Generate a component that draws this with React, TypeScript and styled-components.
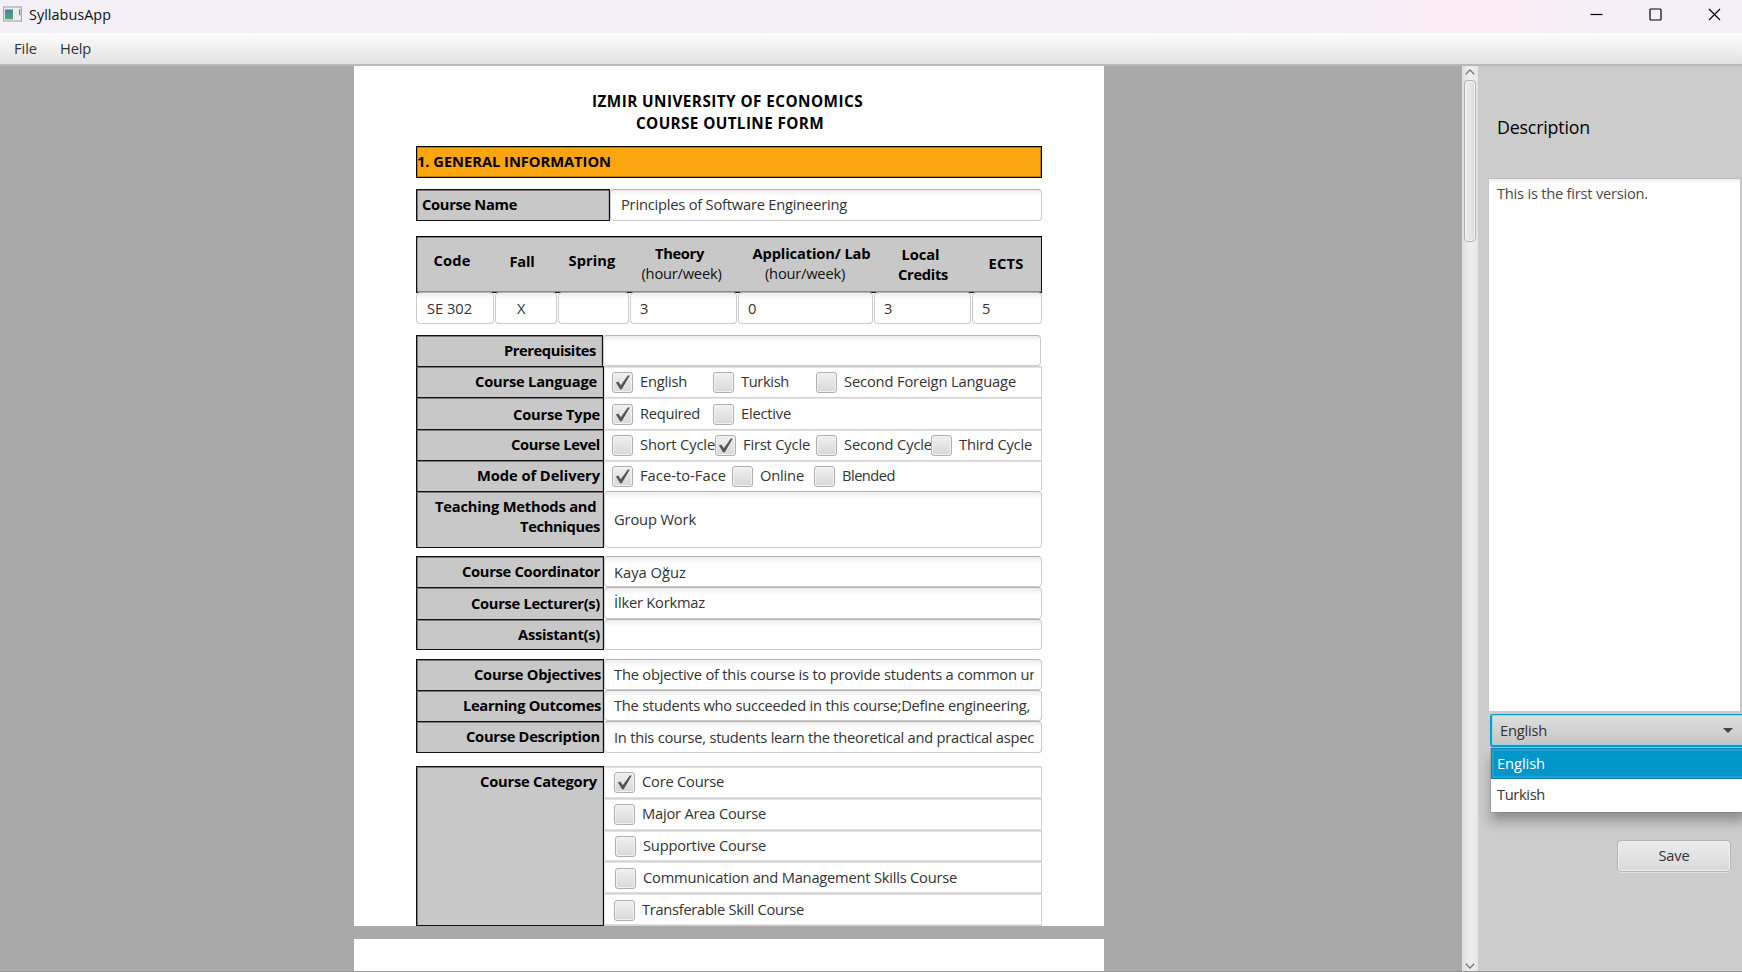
import React, { useLayoutEffect, useRef, useState } from "react";
import styled, { createGlobalStyle, css } from "styled-components";

const Global = createGlobalStyle`
  * { box-sizing: border-box; }
  html, body { margin: 0; padding: 0; overflow: hidden; }
  body { font-family: "Open Sans", "Noto Sans", sans-serif; font-size: 14.5px; color: #333; }
`;

/* ---------- text with an optical width ---------- */

const TextSpan = styled.span<{ $bold?: boolean; $size?: number; $color?: string; $dx?: number; $dy?: number }>`
  display: block;
  flex: none;
  white-space: pre;
  line-height: 18px;
  padding-bottom: 2px;
  font-weight: ${(p) => (p.$bold ? 700 : 400)};
  font-size: ${(p) => p.$size ?? 14.7}px;
  color: ${(p) => p.$color ?? (p.$bold ? "#000" : "#333")};
  margin-left: ${(p) => p.$dx ?? 0}px;
  margin-top: ${(p) => p.$dy ?? 0}px;
`;

type TextProps = {
  children: string;
  w: number;
  bold?: boolean;
  size?: number;
  color?: string;
  dx?: number;
  dy?: number;
};

function Text({ children, w, bold, size, color, dx, dy }: TextProps) {
  const ref = useRef<HTMLSpanElement>(null);
  const [tracking, setTracking] = useState(0);
  useLayoutEffect(() => {
    const el = ref.current;
    if (!el) return;
    const range = document.createRange();
    range.selectNodeContents(el);
    const natural = range.getBoundingClientRect().width;
    setTracking((w - natural) / children.length);
  }, []);
  return (
    <TextSpan
      ref={ref}
      $bold={bold}
      $size={size}
      $color={color}
      $dx={dx}
      $dy={dy}
      style={{ letterSpacing: `${tracking}px` }}
    >
      {children}
    </TextSpan>
  );
}

/* ---------- window chrome ---------- */

const Window = styled.div`
  width: 1742px;
  height: 972px;
  display: flex;
  flex-direction: column;
  overflow: hidden;
  background: #ccc;
`;

const TitleBar = styled.header`
  height: 33px;
  flex: none;
  display: flex;
  align-items: center;
  padding: 0 21px 5px 3px;
  background: linear-gradient(90deg, #f3f0f7 0, #f3f0f7 1150px, #faedf6 1440px, #faedf6 1520px, #f5f0f7 1640px);
`;

const AppIcon = styled.svg`
  width: 19px;
  height: 16px;
  margin-right: 7px;
`;

const Controls = styled.div`
  margin-left: auto;
  display: flex;
  gap: 46px;
  svg {
    width: 13px;
    height: 13px;
    display: block;
    fill: none;
    stroke: #000;
    stroke-width: 1.2;
  }
`;

const MenuBar = styled.nav`
  height: 33px;
  flex: none;
  display: flex;
  align-items: center;
  gap: 23px;
  padding: 0 14px;
  background: linear-gradient(#fdfdfd, #e2e2e2);
  border-bottom: 2px solid #b9b9b9;
`;

const Body = styled.div`
  flex: 1;
  min-height: 0;
  display: flex;
`;

const BottomEdge = styled.footer`
  height: 1px;
  flex: none;
  background: #979797;
`;

/* ---------- document area ---------- */

const Viewport = styled.main`
  width: 1462px;
  flex: none;
  background: #a9a9a9;
  padding-left: 354px;
  display: flex;
  flex-direction: column;
  gap: 13px;
  overflow: hidden;
`;

const Sheet = styled.section`
  width: 750px;
  flex: none;
  height: 860px;
  padding: 24px 62px 0 62px;
  background: #fff;
`;

const FormTitle = styled.div`
  height: 56px;
  display: flex;
  flex-direction: column;
  align-items: center;
  padding: 2px 3px 0 0;
  gap: 2px;
`;

const SectionBar = styled.div`
  height: 32px;
  display: flex;
  align-items: center;
  background: #fda50f;
  border: 1px solid #000;
  box-shadow: inset 0 0 0 1px rgba(90, 50, 0, 0.35);
`;

const Group = styled.div<{ $top: number }>`
  margin-top: ${(p) => p.$top}px;
  display: flex;
  flex-direction: column;
`;

const Row = styled.div<{ $h: number; $inset?: number }>`
  height: ${(p) => p.$h}px;
  flex: none;
  display: flex;
  padding-right: ${(p) => p.$inset ?? 0}px;
`;

const Label = styled.div<{ $w?: number; $right?: number; $left?: number; $last?: boolean }>`
  width: ${(p) => p.$w ?? 188}px;
  flex: none;
  display: flex;
  flex-direction: column;
  justify-content: center;
  align-items: ${(p) => (p.$left !== undefined ? "flex-start" : "flex-end")};
  padding: 0 ${(p) => p.$right ?? 3}px 0 ${(p) => p.$left ?? 0}px;
  background: #c8c8c8;
  border: 1px solid #111;
  border-bottom-width: ${(p) => (p.$last ? 1 : 0)}px;
  box-shadow: inset 1px 1px 0 rgba(0, 0, 0, 0.4), inset -1px 0 0 rgba(0, 0, 0, 0.15);
`;

const Field = styled.div<{ $w?: number; $pad?: number }>`
  ${(p) => (p.$w ? css`width: ${p.$w}px; flex: none;` : css`flex: 1; min-width: 0;`)}
  display: flex;
  align-items: center;
  padding-left: ${(p) => p.$pad ?? 9}px;
  border: 1px solid #cbcbcb;
  border-top-color: #b4b4b4;
  border-radius: 4px;
  background: linear-gradient(#ececec, #fff 6px);
`;

const Clip = styled.div<{ $w: number }>`
  width: ${(p) => p.$w}px;
  overflow: hidden;
`;

const Pane = styled.div<{ $thick?: boolean; $pad?: number; $last?: boolean }>`
  flex: 1;
  min-width: 0;
  display: flex;
  align-items: center;
  padding-left: ${(p) => p.$pad ?? 7}px;
  border: 1px solid #d2d2d2;
  border-bottom-width: ${(p) => (p.$last ? 1 : 0)}px;
  border-left-color: #ddd;
  box-shadow: ${(p) => (p.$thick ? "inset 0 1px 0 #e2e2e2, inset 0 -1px 0 #e0e0e0" : "inset 0 1px 0 #e4e4e4")};
`;

const HeadRow = styled.div`
  height: 57px;
  display: flex;
  background: #c8c8c8;
  border: 1px solid #111;
  border-top-color: #000;
  box-shadow: inset 0 1px 0 rgba(0, 0, 0, 0.35), inset 1px 0 0 rgba(0, 0, 0, 0.25), inset 0 -1px 0 rgba(0, 0, 0, 0.3);
`;

const HeadCell = styled.div<{ $w: number; $top: number; $left?: number }>`
  width: ${(p) => p.$w}px;
  flex: none;
  display: flex;
  flex-direction: column;
  align-items: center;
  padding: ${(p) => p.$top}px 0 0 ${(p) => p.$left ?? 0}px;
`;

const Cells = styled.div`
  display: flex;
  gap: 1px;
  height: 32px;
  margin-top: -1px;
`;

const Box = styled.div`
  width: 21px;
  height: 21px;
  flex: none;
  display: flex;
  align-items: center;
  justify-content: center;
  border: 1px solid #aeaeae;
  border-radius: 3px;
  background: linear-gradient(#f0f0f0, #d8d8d8);
  box-shadow: inset 0 0 0 1px #f3f3f3;
  svg { width: 17px; height: 17px; display: block; }
`;

const CheckItem = styled.div<{ $gap: number; $dy: number }>`
  display: flex;
  align-items: center;
  flex: none;
  gap: 7px;
  margin-left: ${(p) => p.$gap}px;
  margin-top: ${(p) => p.$dy}px;
`;

function Check({ text, w, gap = 0, on, dy = 1 }: { text: string; w: number; gap?: number; on?: boolean; dy?: number }) {
  return (
    <CheckItem $gap={gap} $dy={dy}>
      <Box>
        {on && (
          <svg viewBox="0 0 17 17">
            <path d="M1.9 8.4 L4.3 7.6 L6.8 11.2 L13.8 1.6 L15.8 1.6 L7.8 15.2 L6 15.2 Z" fill="#555" />
          </svg>
        )}
      </Box>
      <Text w={w} dy={-1}>{text}</Text>
    </CheckItem>
  );
}

/* ---------- scroll bar ---------- */

const ScrollBar = styled.div`
  width: 16px;
  flex: none;
  display: flex;
  flex-direction: column;
  align-items: center;
  padding: 3px 0 2px;
  background: linear-gradient(90deg, #dedede, #efefef 50%, #e6e6e6);
  svg { width: 10px; height: 6px; fill: none; stroke: #777; stroke-width: 1.3; display: block; flex: none; }
`;

const Thumb = styled.div`
  width: 12px;
  height: 162px;
  margin: 5px 0 auto 0;
  border: 1px solid #b0b0b0;
  border-radius: 4px;
  background: linear-gradient(90deg, #efefef, #dcdcdc);
  box-shadow: inset 0 0 0 1px #f6f6f6;
`;

/* ---------- side panel ---------- */

const Side = styled.aside`
  flex: 1;
  min-width: 0;
  display: flex;
  flex-direction: column;
  padding: 50px 0 0 11px;
  background: #ccc;
`;

const Heading = styled.div`
  height: 63px;
  padding: 2px 0 0 8px;
`;

const TextArea = styled.div`
  width: 251px;
  height: 532px;
  padding: 5px 0 0 8px;
  background: linear-gradient(#efefef, #fff 5px);
  box-shadow: 0 -1px 0 #bdbdbd, 1px 0 0 #c3c3c3, -1px 0 0 #c6c6c6;
`;

const Combo = styled.div`
  width: 256px;
  height: 33px;
  flex: none;
  margin: 3px 0 0 1px;
  display: flex;
  align-items: center;
  padding: 0 12px 0 8px;
  border: 2px solid #0a9bcf;
  border-width: 1px 2px 2px;
  border-radius: 3px;
  background: linear-gradient(#dedede, #c6c6c6);
  box-shadow: inset 0 0 0 1px #9fd6ea;
  justify-content: space-between;
`;

const Arrow = styled.div`
  border: 5px solid transparent;
  border-top-color: #444;
  border-bottom: 0;
  margin-right: -1px;
`;

const Popup = styled.div`
  width: 256px;
  height: 64px;
  flex: none;
  margin: 1px 0 0 2px;
  background: #fff;
  box-shadow: 0 0 1px rgba(0, 0, 0, 0.6), 0 9px 11px rgba(0, 0, 0, 0.3);
`;

const Option = styled.div<{ $active?: boolean }>`
  height: 31px;
  display: flex;
  align-items: center;
  padding-left: 6px;
  ${(p) => p.$active && css`
    background: #0096c9;
    box-shadow: inset 0 0 0 1px #0a86b4, inset 0 0 0 3px #1fa2d0;
  `}
`;

const SaveButton = styled.div`
  width: 114px;
  height: 32px;
  margin: 28px 0 0 128px;
  display: flex;
  align-items: center;
  justify-content: center;
  border: 1px solid #b4b4b4;
  border-radius: 4px;
  background: linear-gradient(#ececec, #d9d9d9);
  box-shadow: inset 0 0 0 1px #f0f0f0, 0 1px 0 #e2e2e2;
`;

const CategoryRow = styled.div`
  height: 160px;
  display: flex;
`;

const CategoryLabel = styled(Label)`
  justify-content: flex-start;
`;

const Options = styled.div`
  flex: 1;
  min-width: 0;
  display: flex;
  flex-direction: column;
`;

export default function App() {
  return (
    <Window>
      <Global />
      <TitleBar>
        <AppIcon viewBox="0 0 19 16">
          <defs>
            <linearGradient id="pane" x1="0" y1="0" x2="0" y2="1">
              <stop offset="0" stopColor="#4a7fa8" />
              <stop offset="1" stopColor="#55a86c" />
            </linearGradient>
          </defs>
          <rect x="0.6" y="1" width="17.8" height="14" fill="#f3f4f4" stroke="#a6aaac" strokeWidth="1.2" />
          <rect x="2" y="3.4" width="8" height="10" fill="url(#pane)" />
          <rect x="11" y="3.4" width="4.6" height="10" fill="#e8ebe8" />
          <rect x="16" y="3.4" width="1.3" height="6" fill="url(#pane)" />
        </AppIcon>
        <Text w={82} size={14.4} color="#111" dy={4}>SyllabusApp</Text>
        <Controls>
          <svg viewBox="0 0 13 13"><path d="M0.5 6.5H12.5" /></svg>
          <svg viewBox="0 0 13 13"><rect x="1" y="1" width="11" height="11" rx="1" /></svg>
          <svg viewBox="0 0 13 13"><path d="M1 1L12 12M12 1L1 12" /></svg>
        </Controls>
      </TitleBar>
      <MenuBar>
        <Text w={23} dy={1}>File</Text>
        <Text w={31} dy={1}>Help</Text>
      </MenuBar>
      <Body>
        <Viewport>
          <Sheet>
            <FormTitle>
              <Text bold size={15.3} w={271}>IZMIR UNIVERSITY OF ECONOMICS</Text>
              <Text bold size={15.3} w={188} dx={5}>COURSE OUTLINE FORM</Text>
            </FormTitle>
            <SectionBar>
              <Text bold w={194}>1. GENERAL INFORMATION</Text>
            </SectionBar>

            <Group $top={11}>
              <Row $h={32}>
                <Label $w={194} $left={5} $last>
                  <Text bold w={95}>Course Name</Text>
                </Label>
                <Field $pad={10}>
                  <Text w={226}>Principles of Software Engineering</Text>
                </Field>
              </Row>
            </Group>

            <Group $top={15}>
              <HeadRow>
                <HeadCell $w={70} $top={14}><Text bold w={37}>Code</Text></HeadCell>
                <HeadCell $w={70} $top={15}><Text bold w={25}>Fall</Text></HeadCell>
                <HeadCell $w={70} $top={14}><Text bold w={47}>Spring</Text></HeadCell>
                <HeadCell $w={105} $top={7}>
                  <Text bold w={49}>Theory</Text>
                  <Text w={80} color="#111" dx={4}>(hour/week)</Text>
                </HeadCell>
                <HeadCell $w={159} $top={7}>
                  <Text bold w={118}>Application/ Lab</Text>
                  <Text w={80} color="#111" dx={-13}>(hour/week)</Text>
                </HeadCell>
                <HeadCell $w={59} $top={8}>
                  <Text bold w={38}>Local</Text>
                  <Text bold w={50} dx={5}>Credits</Text>
                </HeadCell>
                <HeadCell $w={91} $top={17} $left={21}><Text bold w={35}>ECTS</Text></HeadCell>
              </HeadRow>
              <Cells>
                <Field $w={78} $pad={10}><Text w={45} dy={2}>SE 302</Text></Field>
                <Field $w={62} $pad={21}><Text w={10} dy={2}>X</Text></Field>
                <Field $w={71} />
                <Field $w={107}><Text w={8} dy={2}>3</Text></Field>
                <Field $w={135}><Text w={9} dy={2}>0</Text></Field>
                <Field $w={97}><Text w={8} dy={2}>3</Text></Field>
                <Field><Text w={8} dy={2}>5</Text></Field>
              </Cells>
            </Group>

            <Group $top={11}>
              <Row $h={31} $inset={1}>
                <Label $w={187} $right={6}><Text bold w={92}>Prerequisites</Text></Label>
                <Field />
              </Row>
              <Row $h={31}>
                <Label $right={6}><Text bold w={122}>Course Language</Text></Label>
                <Pane>
                  <Check on text="English" w={47} />
                  <Check text="Turkish" w={48} gap={26} />
                  <Check text="Second Foreign Language" w={172} gap={27} />
                </Pane>
              </Row>
              <Row $h={32}>
                <Label><Text bold w={87} dy={2}>Course Type</Text></Label>
                <Pane>
                  <Check on text="Required" w={60} />
                  <Check text="Elective" w={50} gap={13} />
                </Pane>
              </Row>
              <Row $h={31}>
                <Label><Text bold w={89}>Course Level</Text></Label>
                <Pane>
                  <Check text="Short Cycle" w={75} />
                  <Check on text="First Cycle" w={67} gap={0} />
                  <Check text="Second Cycle" w={88} gap={6} />
                  <Check text="Third Cycle" w={73} gap={-1} />
                </Pane>
              </Row>
              <Row $h={31}>
                <Label><Text bold w={123}>Mode of Delivery</Text></Label>
                <Pane>
                  <Check on text="Face-to-Face" w={86} />
                  <Check text="Online" w={44} gap={6} />
                  <Check text="Blended" w={53} gap={10} />
                </Pane>
              </Row>
              <Row $h={57}>
                <Label $last>
                  <Text bold w={165} dy={-6}>{"Teaching Methods and "}</Text>
                  <Text bold w={80}>Techniques</Text>
                </Label>
                <Field><Text w={82}>Group Work</Text></Field>
              </Row>
            </Group>

            <Group $top={8}>
              <Row $h={31}>
                <Label><Text bold w={138}>Course Coordinator</Text></Label>
                <Field><Text w={72} dy={2}>Kaya Oğuz</Text></Field>
              </Row>
              <Row $h={32}>
                <Label><Text bold w={129}>Course Lecturer(s)</Text></Label>
                <Field><Text w={91}>İlker Korkmaz</Text></Field>
              </Row>
              <Row $h={31}>
                <Label $last><Text bold w={82}>Assistant(s)</Text></Label>
                <Field />
              </Row>
            </Group>

            <Group $top={9}>
              <Row $h={31}>
                <Label $right={2}><Text bold w={127}>Course Objectives</Text></Label>
                <Field>
                  <Clip $w={420}>
                    <Text w={424}>The objective of this course is to provide students a common un</Text>
                  </Clip>
                </Field>
              </Row>
              <Row $h={31}>
                <Label $right={2}><Text bold w={138}>Learning Outcomes</Text></Label>
                <Field><Text w={416}>The students who succeeded in this course;Define engineering,</Text></Field>
              </Row>
              <Row $h={32}>
                <Label $last><Text bold w={134}>Course Description</Text></Label>
                <Field><Text w={420} dy={1}>In this course, students learn the theoretical and practical aspec</Text></Field>
              </Row>
            </Group>

            <Group $top={13}>
              <CategoryRow>
                <CategoryLabel $right={6} $last><Text bold w={117} dy={5}>Course Category</Text></CategoryLabel>
                <Options>
                  <Pane $thick $pad={9}><Check on text="Core Course" w={82} /></Pane>
                  <Pane $thick $pad={9}><Check text="Major Area Course" w={124} /></Pane>
                  <Pane $thick $pad={10}><Check text="Supportive Course" w={123} /></Pane>
                  <Pane $thick $pad={10}><Check text="Communication and Management Skills Course" w={314} /></Pane>
                  <Pane $thick $pad={9} $last><Check text="Transferable Skill Course" w={162} /></Pane>
                </Options>
              </CategoryRow>
            </Group>
          </Sheet>
          <Sheet />
        </Viewport>
        <ScrollBar>
          <svg viewBox="0 0 10 6"><path d="M0.8 5.2L5 1L9.2 5.2" /></svg>
          <Thumb />
          <svg viewBox="0 0 10 6"><path d="M0.8 0.8L5 5L9.2 0.8" /></svg>
        </ScrollBar>
        <Side>
          <Heading>
            <Text w={93} size={17.8} color="#000">Description</Text>
          </Heading>
          <TextArea>
            <Text w={151} color="#4a4a4a">This is the first version.</Text>
          </TextArea>
          <Combo>
            <Text w={47} dy={1}>English</Text>
            <Arrow />
          </Combo>
          <Popup>
            <Option $active><Text w={48} color="#fff">English</Text></Option>
            <Option><Text w={48} dy={1}>Turkish</Text></Option>
          </Popup>
          <SaveButton><Text w={31}>Save</Text></SaveButton>
        </Side>
      </Body>
      <BottomEdge />
    </Window>
  );
}
